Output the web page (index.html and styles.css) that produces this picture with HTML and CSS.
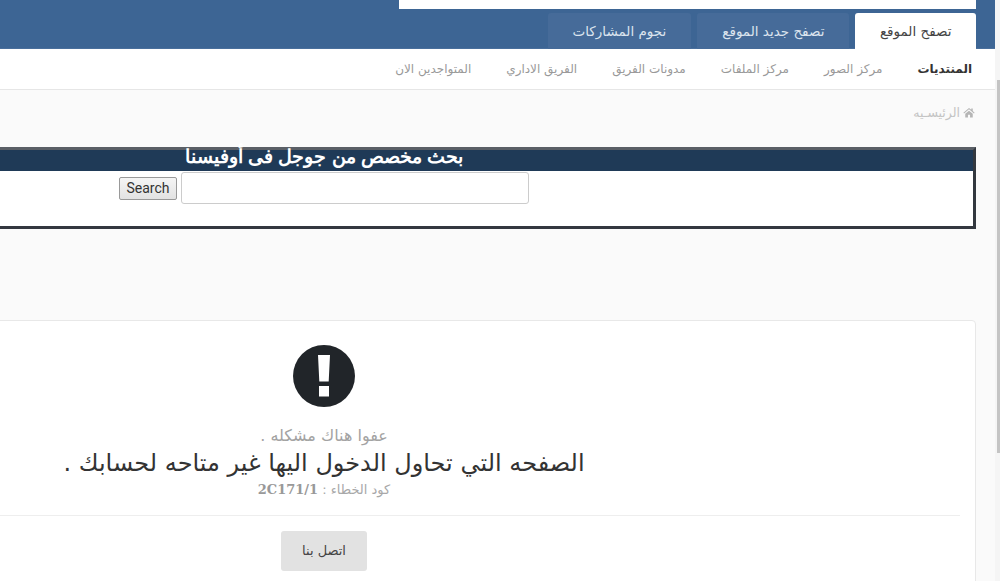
FILE: index.html

```html
<!DOCTYPE html>
<html lang="ar" dir="rtl">
<head>
<meta charset="UTF-8">
<meta name="viewport" content="width=device-width, initial-scale=1.0">
<title>عفوا هناك مشكله</title>
<link rel="stylesheet" href="styles.css">
</head>
<body>

<div class="page">
    <header class="top">
        <div class="top-inner">
            <div class="search-strip"></div>
            <ul class="tabs">
                <li class="tab active">تصفح الموقع</li>
                <li class="tab">تصفح جديد الموقع</li>
                <li class="tab">نجوم المشاركات</li>
            </ul>
        </div>
    </header>

    <nav class="subnav">
        <a class="active" href="#">المنتديات</a>
        <a href="#">مركز الصور</a>
        <a href="#">مركز الملفات</a>
        <a href="#">مدونات الفريق</a>
        <a href="#">الفريق الاداري</a>
        <a href="#">المتواجدين الان</a>
    </nav>

    <div class="content">
        <div class="crumb">
            <svg class="home" viewBox="0 0 16 14" width="12" height="11"><path d="M8 1 0.5 7.200l.9 1L8 2.800l6.600 5.400.9-1L13 5.100V1.500h-2v1.900zM3 8.600V13.500h3.600V10h2.800v3.500H13V8.600L8 4.500z"/></svg>
            <span>الرئيسـيه</span>
        </div>

        <section class="gsearch">
            <h2>بحث مخصص من جوجل فى أوفيسنا</h2>
            <div class="gsearch-form">
                <input class="gsearch-input" type="text">
                <button class="gsearch-btn" type="button">Search</button>
            </div>
        </section>

        <section class="card">
            <svg class="alert" viewBox="0 0 62 62" width="62" height="62">
                <circle cx="31" cy="31" r="31" fill="#212529"/>
                <path d="M25 10h12l-1.300 26.500h-9.400zM26 41h10v10.500H26z" fill="#fff"/>
            </svg>
            <p class="oops">عفوا هناك مشكله .</p>
            <p class="msg">الصفحه التي تحاول الدخول اليها غير متاحه لحسابك .</p>
            <p class="code">كود الخطاء : <b>2C171/1</b></p>
            <hr class="sep">
            <a class="contact" href="#">اتصل بنا</a>
        </section>
    </div>
</div>

<div class="scroll-track"><div class="scroll-thumb"></div></div>

</body>
</html>
```

FILE: styles.css

```css
html, body { margin: 0; height: 100%; overflow: hidden; }
body { font-family: "DejaVu Sans", "Noto Sans", sans-serif; font-size: 13px; background: #fafafa; color: #212529; }
.page { width: 995px; height: 581px; margin-right: 5px; overflow: hidden; }

.top { background: #3d6594; height: 48px; border-bottom: 1px solid #4a6f9c; }
.top-inner { margin-right: 19px; width: 1050px; display: flex; flex-direction: column; }
.search-strip { background: #fff; height: 9px; width: 577px; }
.tabs { list-style: none; margin: 4px 0 0; padding: 0; display: flex; gap: 6px; }
.tab { height: 36px; line-height: 36px; padding: 0 25px; background: #466b99; color: #dce4ee; font-size: 13.5px; border-radius: 3px 3px 0 0; }
.tab.active { background: #fff; color: #444; padding: 0 24.500px; }

.subnav { background: #fff; height: 40px; border-bottom: 1px solid #e6e6e6; display: flex; align-items: center; gap: 35px; padding-right: 23px; }
.subnav a { color: #999; font-size: 12px; text-decoration: none; white-space: nowrap; }
.subnav a.active { color: #333; font-weight: bold; }

.content { padding-right: 19px; width: 1304px; }
.crumb { display: flex; align-items: center; gap: 3px; height: 20px; padding: 12px 1px 0 0; color: #c4c4c4; font-size: 12.500px; }
.home { fill: #b5b5b5; }

.gsearch { margin-top: 25px; height: 76px; border: 3px solid #33383f; border-top-color: #5a5f66; background: #fff; }
.gsearch h2 { margin: 0; background: #1f3a57; color: #fff; height: 21px; font: bold 18.7px/14px "Liberation Sans", sans-serif; text-align: center; }
.gsearch-form { display: flex; align-items: center; margin-right: 444px; padding-top: 1px; gap: 4px; }
.gsearch-input { width: 348px; height: 32px; box-sizing: border-box; border: 1px solid #ccc; border-radius: 3px; background: #fff; padding: 0; }
.gsearch-btn { width: 58px; height: 23px; padding: 0; font: 14px Roboto, sans-serif; color: #333; border: 1px solid #999; border-radius: 2px; background: linear-gradient(#f5f5f5, #e2e2e2); }

.card { margin-top: 91px; border: 1px solid #e8e8e8; border-radius: 4px; background: #fff; text-align: center; padding-top: 24px; height: 300px; }
.card p { margin: 0; }
.alert { display: block; margin: 0 auto; }
.card .oops { margin-top: 18px; color: #a3a3a3; font-size: 16px; line-height: 22px; }
.msg { font-size: 24px; line-height: 32px; color: #333; }
.code { font-size: 13px; color: #a8a8a8; line-height: 20px; padding-top: 1px; }
.code b { font-family: "DejaVu Serif", serif; color: #999; font-size: 13px; }
.sep { border: 0; height: 1px; background: #eee; margin: 15px 15px 15px 0; }
.contact { display: inline-block; width: 86px; height: 40px; line-height: 40px; background: #e2e2e2; border-radius: 3px; color: #444; font-size: 13px; text-decoration: none; }

.scroll-track { position: absolute; top: 0; right: 0; width: 5px; height: 100%; background: #f5f5f5; }
.scroll-thumb { position: absolute; top: 80px; right: 0; width: 3px; height: 373px; background: #c4c4c4; }
```
